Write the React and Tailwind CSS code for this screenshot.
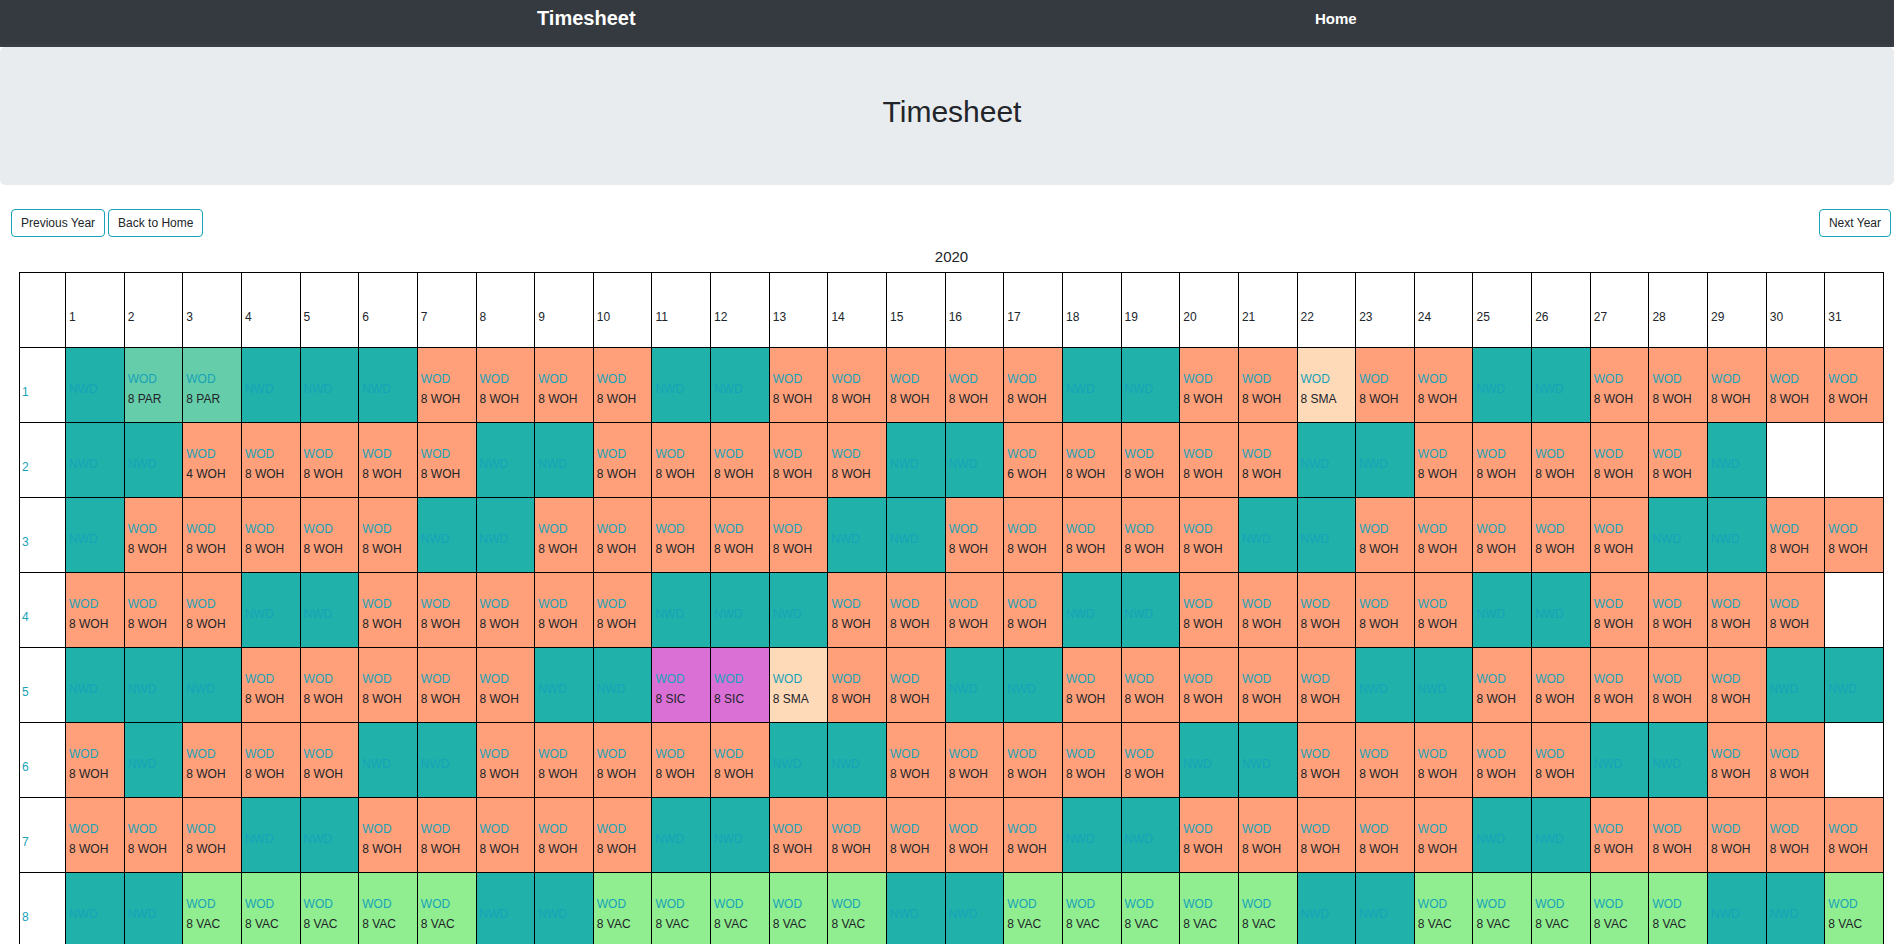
import React from "react";

const SPEC = [
  "N P P N N N W W W W N N W W W W W N N W W M W W N N W W W W W",
  "N N 4 W W W W N N W W W W W N N 6 W W W W N N W W W W W N - -",
  "N W W W W W N N W W W W W N N W W W W W N N W W W W W N N W W",
  "W W W N N W W W W W N N N W W W W N N W W W W W N N W W W W -",
  "N N N W W W W W N N S S M W W N N W W W W W N N W W W W W N N",
  "W N W W W N N W W W W W N N W W W W W N N W W W W W N N W W -",
  "W W W N N W W W W W N N W W W W W N N W W W W W N N W W W W W",
  "N N V V V V V N N V V V V V N N V V V V V N N V V V V V N N V",
];

const MONTHS = SPEC.map((s) => s.split(" "));

const TYPES = {
  N: { bg: "bg-[#20b2aa]", nwd: true },
  W: { bg: "bg-[#ffa07a]", value: "8 WOH" },
  "4": { bg: "bg-[#ffa07a]", value: "4 WOH" },
  "6": { bg: "bg-[#ffa07a]", value: "6 WOH" },
  P: { bg: "bg-[#66cdaa]", value: "8 PAR" },
  M: { bg: "bg-[#ffdab9]", value: "8 SMA" },
  S: { bg: "bg-[#da70d6]", value: "8 SIC" },
  V: { bg: "bg-[#90ee90]", value: "8 VAC" },
  "-": { bg: "bg-white", empty: true },
};

function Btn({ children }) {
  return (
    <button className="h-[28px] px-[9px] border border-[#17a2b8] rounded-[4px] bg-white text-[12px] leading-[18px] text-[#212529]">
      {children}
    </button>
  );
}

function DayCell({ code }) {
  const t = TYPES[code];
  return (
    <div
      className={`${t.bg} h-[74px] pl-[3px] pt-[8px] flex flex-col justify-center text-[12px] leading-[20px]`}
    >
      {t.nwd && <div className="text-[#17a2b8]">NWD</div>}
      {t.value && (
        <>
          <div className="text-[#17a2b8]">WOD</div>
          <div className="text-[#212529]">{t.value}</div>
        </>
      )}
    </div>
  );
}

export default function App() {
  const days = Array.from({ length: 31 }, (_, i) => i + 1);
  return (
    <div className="font-['Liberation_Sans',Arial,sans-serif] bg-white min-h-screen">
      <nav className="h-[47px] bg-[#343a40] flex shadow-[inset_0_-3px_0_#393e45]">
        <div className="w-[1315px] pl-[537px] pt-[3px]">
          <span className="text-white font-bold text-[20px] leading-[30px]">
            Timesheet
          </span>
        </div>
        <div className="pt-[7px]">
          <span className="text-white font-bold text-[15px] leading-[22px]">
            Home
          </span>
        </div>
      </nav>

      <div className="h-[138px] bg-[#e9ecef] rounded-[5px] pt-[47px] pl-[10px] text-center">
        <h1 className="text-[30px] leading-[36px] font-normal text-[#212529]">
          Timesheet
        </h1>
      </div>

      <div className="mt-[24px] flex justify-between pl-[11px] pr-[3px]">
        <div className="flex gap-[3px]">
          <Btn>Previous Year</Btn>
          <Btn>Back to Home</Btn>
        </div>
        <Btn>Next Year</Btn>
      </div>

      <div className="ml-[19px] mr-[10px]">
        <div className="mt-[10px] mb-[5px] h-[20px] text-center text-[15px] leading-[20px] text-[#212529]">
          2020
        </div>
        <div className="grid grid-cols-[45px_repeat(31,minmax(0,1fr))] gap-px bg-black p-px">
          <div className="bg-white h-[74px]" />
          {days.map((d) => (
            <div
              key={d}
              className="bg-white h-[74px] pl-[3px] pt-[14px] flex items-center text-[12px] leading-[20px] text-[#212529]"
            >
              {d}
            </div>
          ))}
          {MONTHS.map((row, mi) => (
            <React.Fragment key={mi}>
              <div className="bg-white h-[74px] pl-[2px] pt-[14px] flex items-center text-[12px] leading-[20px] text-[#17a2b8]">
                {mi + 1}
              </div>
              {row.map((code, di) => (
                <DayCell key={di} code={code} />
              ))}
            </React.Fragment>
          ))}
        </div>
      </div>
    </div>
  );
}
